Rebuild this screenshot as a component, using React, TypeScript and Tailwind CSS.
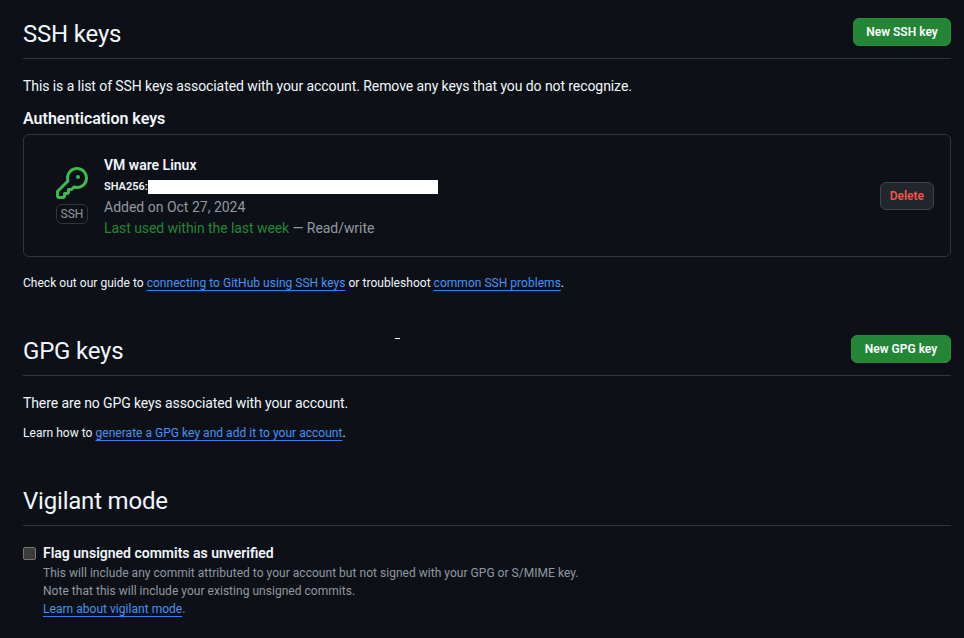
const FONT = "font-['Roboto','Open_Sans',sans-serif]";

const LINK = "text-[#4493f8] underline underline-offset-[3px] decoration-[#2f81f7]";

function KeyIcon() {
  return (
    <svg viewBox="0 0 16 16" width="32" height="32" fill="#3fb950">
      <path d="M10.5 0a5.499 5.499 0 1 1-1.288 10.848l-.932.932a.75.75 0 0 1-.53.22H7v.75a.75.75 0 0 1-.22.53l-.5.5a.75.75 0 0 1-.53.22H5v.75a.75.75 0 0 1-.22.53l-.5.5a.75.75 0 0 1-.53.22h-2A1.75 1.75 0 0 1 0 14.25v-2c0-.199.079-.389.22-.53l4.932-4.932A5.5 5.5 0 0 1 10.5 0Zm-4 5.5c-.001.431.069.86.205 1.269a.75.75 0 0 1-.181.768L1.5 12.56v1.69c0 .138.112.25.25.25h1.69l.06-.06v-1.19a.75.75 0 0 1 .75-.75h1.19l.06-.06v-1.19a.75.75 0 0 1 .75-.75h1.19l1.023-1.025a.75.75 0 0 1 .768-.18A4 4 0 1 0 6.5 5.5ZM11 6a1 1 0 1 1 0-2 1 1 0 0 1 0 2Z" />
    </svg>
  );
}

function SectionHead({ title, action, wide }: { title: string; action?: string; wide?: boolean }) {
  return (
    <div className="flex h-[41px] items-start justify-between border-b border-[#30363d]">
      <h2 className="text-[24px] leading-[32px] tracking-[-0.2px] text-[#f0f6fc]">{title}</h2>
      {action && (
        <button className={`h-[28px] rounded-md border border-[#2f8a3f] bg-[#238636] text-[12px] font-semibold text-white ${wide ? "w-[100px]" : "w-[98px]"}`}>
          {action}
        </button>
      )}
    </div>
  );
}

export default function App() {
  return (
    <div className={`${FONT} h-[638px] overflow-hidden bg-[#0d1117] pl-[23px] pr-[13px] pt-[18px] text-[14px] text-[#f0f6fc]`}>
      {/* SSH keys */}
      <SectionHead title="SSH keys" action="New SSH key" />
      <p className="mt-[17px] leading-[21px] tracking-[-0.08px]">
        This is a list of SSH keys associated with your account. Remove any keys that you do not recognize.
      </p>
      <h3 className="mt-[11px] text-[16px] font-semibold leading-[22px]">Authentication keys</h3>
      <div className="mt-[4px] flex h-[123px] items-center justify-between rounded-md border border-[#30363d] pl-[32px] pr-[16px]">
        <div className="flex items-center gap-[16px]">
          <div className="flex flex-col items-center gap-[5px]">
            <KeyIcon />
            <span className="flex h-[20px] w-[32px] items-center justify-center rounded-md border border-[#30363d] text-[12px] text-[#9198a1]">
              SSH
            </span>
          </div>
          <div className="pt-[2px]">
            <div className="text-[14px] font-semibold leading-[21px]">VM ware Linux</div>
            <div className="mt-[1px] flex h-[21px] items-center text-[11px] font-semibold">
              SHA256:<span className="h-[14px] w-[290px] bg-white" />
            </div>
            <div className="-mt-[1px] leading-[21px] text-[#9198a1]">Added on Oct 27, 2024</div>
            <div className="leading-[21px] tracking-[-0.06px] text-[#9198a1]">
              <span className="text-[#238636]">Last used within the last week</span> — Read/write
            </div>
          </div>
        </div>
        <button className="h-[28px] rounded-md border border-[#3d444d] bg-[#21262d] px-[9px] text-[12px] font-semibold text-[#f85149]">
          Delete
        </button>
      </div>
      <p className="mt-[16px] text-[12px] leading-[20px] tracking-[0.03px]">
        Check out our guide to <a className={LINK}>connecting to GitHub using SSH keys</a> or troubleshoot{" "}
        <a className={LINK}>common SSH problems</a>.
      </p>

      {/* GPG keys */}
      <div className="relative mt-[42px]">
        <SectionHead title="GPG keys" action="New GPG key" wide />
        <span className="absolute left-[372px] top-[3px] h-px w-[5px] bg-white" />
      </div>
      <p className="mt-[17px] leading-[21px] tracking-[-0.1px]">There are no GPG keys associated with your account.</p>
      <p className="mt-[10px] text-[12px] leading-[18px] tracking-[0.03px]">
        Learn how to <a className={LINK}>generate a GPG key and add it to your account</a>.
      </p>

      {/* Vigilant mode */}
      <div className="mt-[43px]">
        <SectionHead title="Vigilant mode" />
      </div>
      <div className="mt-[17px] flex gap-[7px]">
        <input type="checkbox" className="mt-[4px] h-[13px] w-[13px] appearance-none rounded-[2px] border border-[#767676] bg-[#3b3b3b]" />
        <div>
          <div className="font-semibold leading-[21px]">Flag unsigned commits as unverified</div>
          <div className="text-[12px] leading-[18px] tracking-[0.03px] text-[#9198a1]">
            <div>This will include any commit attributed to your account but not signed with your GPG or S/MIME key.</div>
            <div>Note that this will include your existing unsigned commits.</div>
            <div>
              <a className={LINK}>Learn about vigilant mode</a>.
            </div>
          </div>
        </div>
      </div>
    </div>
  );
}
